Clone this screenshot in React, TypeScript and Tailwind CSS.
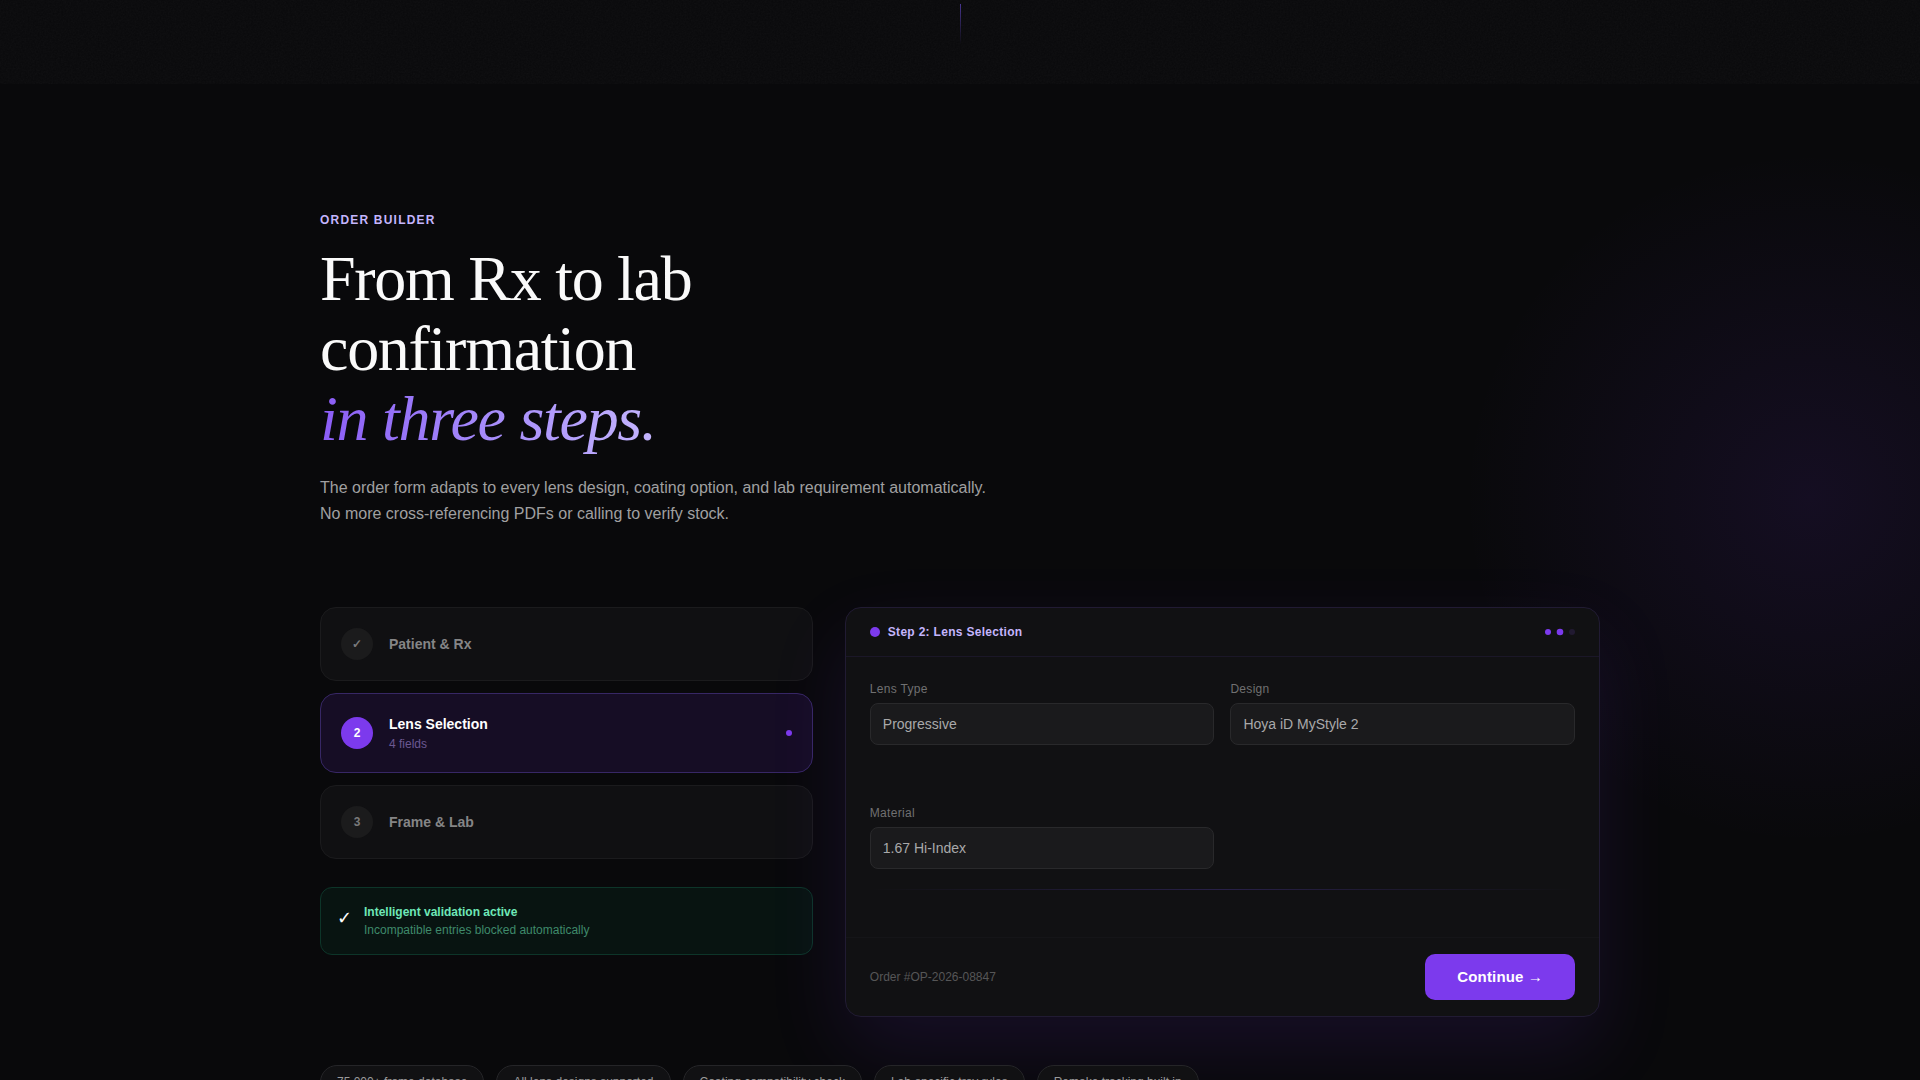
import { useState } from "react";
import clsx from "clsx";

type Step = {
  id: number;
  title: string;
  meta?: string;
  badge: string;
};

type Field = {
  id: string;
  label: string;
  value: string;
};

const steps: Step[] = [
  { id: 1, title: "Patient & Rx", badge: "✓" },
  { id: 2, title: "Lens Selection", meta: "4 fields", badge: "2" },
  { id: 3, title: "Frame & Lab", badge: "3" },
];

const fields: Field[] = [
  { id: "lens-type", label: "Lens Type", value: "Progressive" },
  { id: "design", label: "Design", value: "Hoya iD MyStyle 2" },
  { id: "material", label: "Material", value: "1.67 Hi-Index" },
];

const chips = [
  "75,000+ frame database",
  "All lens designs supported",
  "Coating compatibility check",
  "Lab-specific tray rules",
  "Remake tracking built in",
];

// Bottom of the hero: film grain and the scroll hint line
function HeroEdge() {
  return (
    <div className="relative flex h-[84px] justify-center overflow-hidden bg-[#09090b] pt-1">
      <svg className="absolute inset-0 h-full w-full opacity-[0.04]" aria-hidden="true">
        <filter id="grain">
          <feTurbulence type="fractalNoise" baseFrequency="0.6" numOctaves="3" stitchTiles="stitch" />
          <feColorMatrix type="saturate" values="0" />
        </filter>
        <rect width="100%" height="100%" filter="url(#grain)" />
      </svg>
      <div className="h-10 w-px bg-linear-to-b from-[#6d4ee8]/60 to-transparent" />
    </div>
  );
}

function StepCard({ step, active, onSelect }: { step: Step; active: boolean; onSelect: () => void }) {
  return (
    <button
      type="button"
      onClick={onSelect}
      className={clsx(
        "flex w-full cursor-pointer items-center gap-4 rounded-2xl border p-5 text-left",
        active ? "border-[#372765] bg-[#160d25]" : "border-[#1b1b1d] bg-[#101012]"
      )}
    >
      <span
        className={clsx(
          "flex h-8 w-8 shrink-0 items-center justify-center rounded-full text-xs font-bold",
          active ? "bg-[#7c3aed] text-white" : "bg-[#1b1b1c] text-[#7a7a7b]"
        )}
      >
        {step.badge}
      </span>
      <span className="flex flex-1 flex-col gap-0.5">
        <span className={clsx("text-sm font-semibold", active ? "text-white" : "text-[#858586]")}>{step.title}</span>
        {step.meta && <span className="text-xs text-[#6b5892]">{step.meta}</span>}
      </span>
      {active && <span className="h-1.5 w-1.5 rounded-full bg-[#7c3aed]" />}
    </button>
  );
}

function FormPanel() {
  return (
    <form
      onSubmit={(e) => e.preventDefault()}
      className="rounded-2xl border border-[#211b33] bg-[#111113] shadow-[0_32px_80px_rgba(124,58,237,0.12)]"
    >
      <div className="flex items-center justify-between border-b border-[#1b1728] px-6 py-4">
        <div className="flex items-center gap-2">
          <span className="h-2.5 w-2.5 rounded-full bg-[#7c3aed]" />
          <h3 className="text-xs font-semibold tracking-wide text-[#c4b5fd]">Step 2: Lens Selection</h3>
        </div>
        <div className="flex items-center gap-1.5">
          <span className="h-1.5 w-1.5 rounded-full bg-[#7c3aed]" />
          <span className="h-1.5 w-1.5 scale-110 rounded-full bg-[#7c3aed]" />
          <span className="h-1.5 w-1.5 rounded-full bg-[#211a31]" />
        </div>
      </div>

      <div className="relative grid min-h-[280px] auto-rows-fr grid-cols-2 gap-4 p-6">
        {fields.map((field) => (
          <div key={field.id} className="flex flex-col gap-1.5">
            <label htmlFor={field.id} className="text-xs tracking-wide text-[#707071]">
              {field.label}
            </label>
            <input
              id={field.id}
              type="text"
              defaultValue={field.value}
              className="w-full rounded-lg border border-[#29292b] bg-[#1a1a1c] px-3 py-2.5 text-sm text-[#a9a9aa] outline-none"
            />
          </div>
        ))}
        {/* scan line */}
        <div className="absolute inset-x-6 top-[83%] h-px bg-linear-to-r from-transparent via-[#6d4ee8]/25 to-transparent" />
      </div>

      <div className="flex items-center justify-between border-t border-[#151518] px-6 py-4">
        <span className="text-xs text-[#565657]">Order #OP-2026-08847</span>
        <button
          type="submit"
          className="cursor-pointer rounded-[10px] bg-[#7c3aed] px-8 py-3 text-[15px] leading-[22px] font-semibold tracking-[0.01em] text-white"
        >
          Continue →
        </button>
      </div>
    </form>
  );
}

export default function App() {
  const [activeStep, setActiveStep] = useState(2);

  return (
    <main className="min-h-screen overflow-hidden bg-[#09090b] font-['Liberation_Sans',Arial,sans-serif] text-white">
      <HeroEdge />

      <section className="relative py-32">
        <div className="pointer-events-none absolute top-16 -right-60 h-[700px] w-[700px] bg-[radial-gradient(circle,rgba(124,58,237,0.10)_0%,transparent_70%)]" />

        <div className="relative mx-auto max-w-7xl">
          <div className="max-w-2xl">
            <p className="text-xs font-semibold tracking-widest text-[#c4b5fd] uppercase">Order Builder</p>
            <h2 className="mt-4 font-['Liberation_Serif',Georgia,serif] text-[64px] leading-[70px] tracking-[-0.02em] text-[#fafafa]">
              From Rx to lab confirmation
              <br />
              <em className="bg-linear-to-r from-[#8b5cf6] to-[#c4b5fd] bg-clip-text text-transparent">
                in three steps.
              </em>
            </h2>
            <p className="mt-[21px] text-base leading-[26px] text-[#a0a0a1]">
              The order form adapts to every lens design, coating option, and lab requirement automatically. No more
              cross-referencing PDFs or calling to verify stock.
            </p>
          </div>

          <div className="mt-20 grid grid-cols-5 items-start gap-8">
            <div className="col-span-2 flex flex-col gap-3">
              {steps.map((step) => (
                <StepCard
                  key={step.id}
                  step={step}
                  active={step.id === activeStep}
                  onSelect={() => setActiveStep(step.id)}
                />
              ))}

              <div className="mt-4 flex items-start gap-3 rounded-xl border border-[#0d3529] bg-[#081411] p-4">
                <span className="text-lg text-white">✓</span>
                <div className="flex flex-col gap-0.5 text-xs">
                  <p className="font-semibold text-[#6ee7b7]">Intelligent validation active</p>
                  <p className="text-[#3f8a6b]">Incompatible entries blocked automatically</p>
                </div>
              </div>
            </div>

            <div className="col-span-3">
              <FormPanel />
            </div>
          </div>

          <ul className="relative mt-12 flex flex-wrap gap-3">
            {chips.map((chip) => (
              <li
                key={chip}
                className="rounded-full border border-[#252528] bg-[#111113] px-4 py-2 text-xs text-[#9a9a9b]"
              >
                {chip}
              </li>
            ))}
          </ul>
        </div>
      </section>
    </main>
  );
}
